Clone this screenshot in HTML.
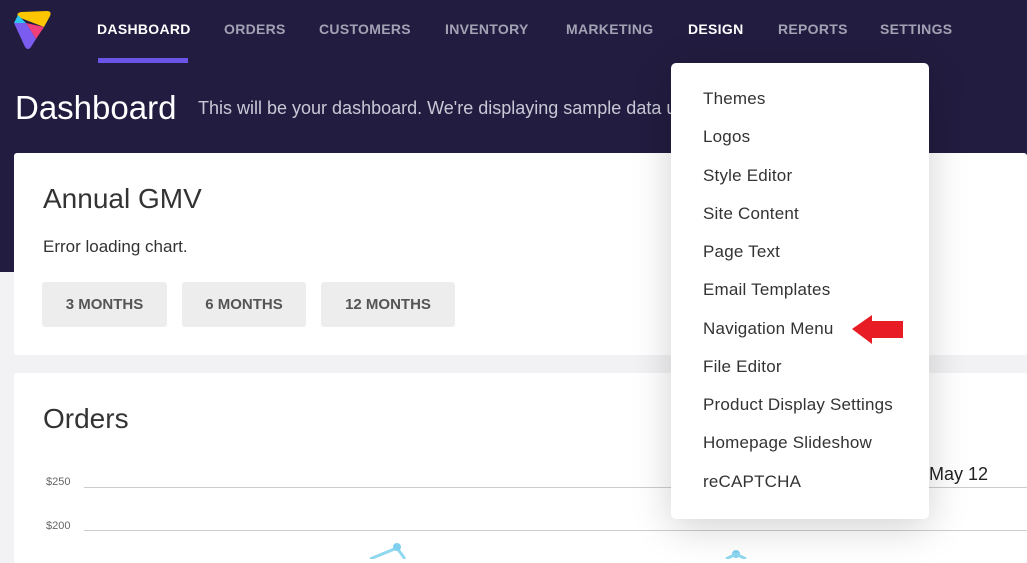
<!DOCTYPE html>
<html><head><meta charset="utf-8"><style>
*{margin:0;padding:0;box-sizing:border-box}
body{width:1027px;height:559px;overflow:hidden;background:#f2f2f4;font-family:"Liberation Sans",sans-serif;position:relative}
.band{position:absolute;left:0;top:0;width:1027px;height:272px;background:#221d40}
.nav a{position:absolute;top:21px;font-size:14px;font-weight:bold;color:#a3a1b4;letter-spacing:0.3px}
.ul{position:absolute;left:98px;top:58px;width:90px;height:5px;background:#6a55e8}
h1{position:absolute;left:15px;top:89px;font-size:33px;font-weight:normal;color:#fff}
.sub{position:absolute;left:198px;top:98px;font-size:18px;color:#c9c8d6}
.card{position:absolute;left:14px;width:1013px;background:#fff;border-radius:3px}
.t{position:absolute;left:29px;font-size:28px;color:#333}
.btn{position:absolute;top:129px;height:45px;background:#ededee;border-radius:3px;font-size:15px;font-weight:bold;color:#555;text-align:center;line-height:45px}
.menu{position:absolute;left:671px;top:63px;width:258px;height:456px;background:#fff;border-radius:5px;box-shadow:0 8px 40px rgba(0,0,0,.18)}
.menu div{position:absolute;left:32px;font-size:17px;color:#333;letter-spacing:0.2px}
.ax{position:absolute;font-size:11px;color:#666}
.gl{position:absolute;left:84px;width:943px;height:1px;background:#ccc}
</style></head><body>
<div class="band"></div>
<svg style="position:absolute;left:12px;top:9px" width="40" height="42" viewBox="0 0 40 42">
<path d="M6 8 Q4 4 9 3 L35 2 Q40 2 38 7 L32 18 Z" fill="#ffc600"/>
<path d="M2 14 L6 6 L14 14 Z" fill="#2ec4f0"/>
<path d="M14 14 L32 18 L24 30 Z" fill="#f03e7b"/>
<path d="M2 14 L14 14 L24 30 L19 38 Q16 42 13 38 Z" fill="#7b5cf0"/>
</svg>
<div class="nav">
<a style="left:97px;color:#fff">DASHBOARD</a><a style="left:224px">ORDERS</a><a style="left:319px">CUSTOMERS</a><a style="left:445px">INVENTORY</a><a style="left:566px">MARKETING</a><a style="left:688px;color:#fff">DESIGN</a><a style="left:778px">REPORTS</a><a style="left:880px">SETTINGS</a>
</div>
<div class="ul"></div>
<h1>Dashboard</h1>
<div class="sub">This will be your dashboard. We're displaying sample data un</div>
<div class="card" style="top:153px;height:202px">
<div class="t" style="top:30px">Annual GMV</div>
<div style="position:absolute;left:29px;top:84px;font-size:17px;color:#333">Error loading chart.</div>
<div class="btn" style="left:28px;width:125px">3 MONTHS</div>
<div class="btn" style="left:168px;width:124px">6 MONTHS</div>
<div class="btn" style="left:307px;width:134px">12 MONTHS</div>
</div>
<div class="card" style="top:373px;height:190px">
<div class="t" style="top:30px">Orders</div>
</div>
<div class="ax" style="left:46px;top:476px">$250</div>
<div class="ax" style="left:46px;top:520px">$200</div>
<div class="gl" style="top:487px"></div>
<div class="gl" style="top:530px"></div>
<div style="position:absolute;left:929px;top:464px;font-size:18px;color:#222">May 12</div>
<svg style="position:absolute;left:360px;top:540px" width="400" height="19"><path d="M10 19 L37 8 L45 19" stroke="#8fd8f0" stroke-width="3" fill="none"/><circle cx="37" cy="7" r="4" fill="#7fd0ee"/><circle cx="376" cy="14" r="4" fill="#7fd0ee"/><path d="M366 19 L376 14 L386 19" stroke="#8fd8f0" stroke-width="3" fill="none"/></svg>
<div class="menu">
<div style="top:26px">Themes</div><div style="top:64px">Logos</div><div style="top:103px">Style Editor</div><div style="top:141px">Site Content</div><div style="top:179px">Page Text</div><div style="top:217px">Email Templates</div><div style="top:256px">Navigation Menu</div><div style="top:294px">File Editor</div><div style="top:332px">Product Display Settings</div><div style="top:370px">Homepage Slideshow</div><div style="top:409px">reCAPTCHA</div>
</div>
<svg style="position:absolute;left:850px;top:313px" width="55" height="34"><polygon points="2,16 22,2 22,8 53,8 53,25 22,25 22,31" fill="#e81c24"/></svg>
</body></html>
